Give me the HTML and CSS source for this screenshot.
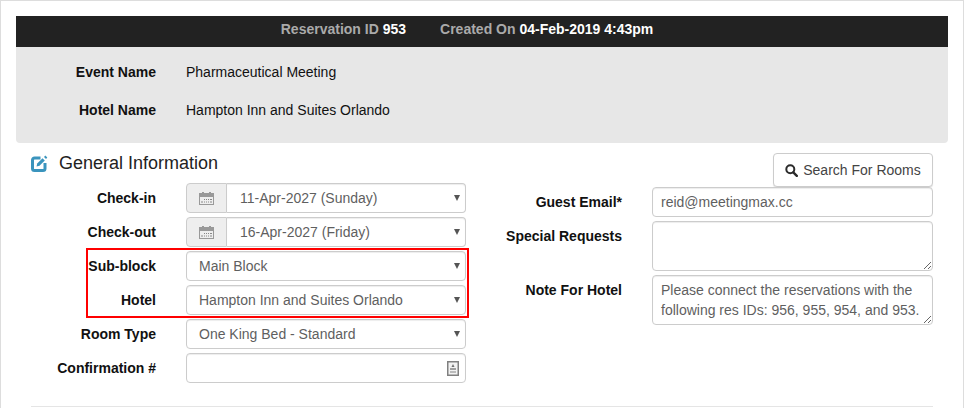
FILE: index.html
```html
<!doctype html>
<html lang="en">
  <head>
    <meta charset="utf-8">
    <title>Reservation 953</title>
    <link rel="stylesheet" href="styles.css">
  </head>
  <body>
    <div id="panel">
      <div class="res_bar">
        <span>Reservation ID <b>953</b></span>
        <span>Created On <b>04-Feb-2019 4:43pm</b></span>
      </div>
      <div class="res_info">
        <div class="info_row"><label>Event Name</label><span>Pharmaceutical Meeting</span></div>
        <div class="info_row"><label>Hotel Name</label><span>Hampton Inn and Suites Orlando</span></div>
      </div>

      <div class="form_cols">
        <div class="col_left">
          <h2 class="section_title">
            <svg class="edit_icon" viewBox="0 0 17 17" width="17" height="17">
              <path d="M9.500 3H3.500A2 2 0 0 0 1.500 5v8.500a2 2 0 0 0 2 2H12a2 2 0 0 0 2-2V8" fill="none" stroke="#3a94bd" stroke-width="3"/>
              <path d="M5.500 11.500l.7-3 5.300-5.300 2.300 2.300-5.300 5.300z" fill="#3a94bd"/>
              <path d="M14.300 .6l2 2-1.300 1.300-2-2z" fill="#3a94bd"/>
            </svg>
            General Information
          </h2>

          <div class="form_row">
            <label>Check-in</label>
            <div class="date_group">
              <span class="addon">
                <svg viewBox="0 0 15 13" width="15" height="13"><use href="#cal"/></svg>
              </span>
              <div class="select_wrap">
                <select class="date_select"><option>11-Apr-2027 (Sunday)</option></select>
              </div>
            </div>
          </div>
          <div class="form_row">
            <label>Check-out</label>
            <div class="date_group">
              <span class="addon">
                <svg viewBox="0 0 15 13" width="15" height="13"><use href="#cal"/></svg>
              </span>
              <div class="select_wrap">
                <select class="date_select"><option>16-Apr-2027 (Friday)</option></select>
              </div>
            </div>
          </div>

          <div class="marked_group">
            <div class="red_box"></div>
            <div class="form_row">
              <label>Sub-block</label>
              <div class="select_wrap"><select><option>Main Block</option></select></div>
            </div>
            <div class="form_row">
              <label>Hotel</label>
              <div class="select_wrap"><select><option>Hampton Inn and Suites Orlando</option></select></div>
            </div>
          </div>

          <div class="form_row">
            <label>Room Type</label>
            <div class="select_wrap"><select><option>One King Bed - Standard</option></select></div>
          </div>
          <div class="form_row">
            <label>Confirmation #</label>
            <div class="input_wrap">
              <input type="text" class="text_input">
              <svg class="conf_icon" viewBox="0 0 12 15" width="12" height="15">
                <rect x="0.750" y="0.750" width="10.500" height="13.500" fill="#f2f2f2" stroke="#808080" stroke-width="1.500"/>
                <path d="M6 3l1.500 3h-3z" fill="#707070"/>
                <rect x="3" y="7" width="6" height="2" fill="#a0a0a0"/>
                <rect x="3" y="10" width="6" height="2" fill="#bbb"/>
              </svg>
            </div>
          </div>
        </div>

        <div class="col_right">
          <div class="btn_line">
            <button class="search_btn">
              <svg viewBox="0 0 13 13" width="13" height="13">
                <circle cx="5.300" cy="5.300" r="4" fill="none" stroke="#2b2b2b" stroke-width="2"/>
                <path d="M8.300 8.300l3.500 3.500" stroke="#2b2b2b" stroke-width="2.400" stroke-linecap="round"/>
              </svg>
              Search For Rooms
            </button>
          </div>
          <div class="form_row right">
            <label>Guest Email*</label>
            <input type="text" class="text_input" value="reid@meetingmax.cc">
          </div>
          <div class="form_row right">
            <label class="top">Special Requests</label>
            <textarea class="text_area"></textarea>
          </div>
          <div class="form_row right">
            <label class="top">Note For Hotel</label>
            <textarea class="text_area">Please connect the reservations with the following res IDs: 956, 955, 954, and 953.</textarea>
          </div>
        </div>
      </div>
      <div class="divider"></div>
    </div>

    <svg width="0" height="0" class="defs">
      <symbol id="cal" viewBox="0 0 15 13">
        <rect x="0.500" y="1.500" width="14" height="11" fill="#eee" stroke="#999"/>
        <rect x="1" y="2" width="13" height="3" fill="#999"/>
        <rect x="3" y="0" width="2" height="3" fill="#999"/>
        <rect x="10" y="0" width="2" height="3" fill="#999"/>
        <path d="M5 7h1v1H5zM7 7h1v1H7zM9 7h1v1H9zM11 7h2v1h-2zM2 9.500h2v1H2zM5 9.500h1v1H5zM7 9.500h1v1H7zM9 9.500h1v1H9zM11 9.500h2v1h-2z" fill="#888"/>
      </symbol>
    </svg>
  </body>
</html>
```

FILE: styles.css
```css
* {
  box-sizing: border-box;
}
html, body {
  height: 100%;
}
body {
  margin: 0;
  background-color: white;
  font-family: "Liberation Sans", Arial, sans-serif;
  font-size: 14px;
  color: #111;
  overflow: hidden;
}
.defs {
  position: absolute;
}
#panel {
  height: 408px;
  width: 964px;
  padding: 15px 15px 0 15px;
  border: 1px solid #ddd;
  border-bottom: none;
  overflow: hidden;
}

/* header */
.res_bar {
  height: 31px;
  background-color: #222;
  color: #aaa;
  font-weight: bold;
  display: flex;
  justify-content: center;
  align-items: center;
  gap: 34px;
  padding-right: 30px;
  padding-bottom: 6px;
}
.res_bar b {
  color: white;
}
.res_info {
  height: 96px;
  background-color: #e7e7e7;
  border-radius: 0 0 4px 4px;
  padding-top: 6px;
}
.info_row {
  height: 38px;
  display: flex;
  align-items: center;
  gap: 30px;
}
.info_row label {
  width: 140px;
  text-align: right;
  font-weight: bold;
}

/* form */
.form_cols {
  display: flex;
  padding: 10px 15px 0 15px;
}
.col_left {
  width: 435px;
}
.col_right {
  width: 467px;
}
.section_title {
  margin: 0 0 11px 0;
  height: 19px;
  font-size: 18px;
  font-weight: normal;
  line-height: 20px;
  color: #222;
  display: flex;
  align-items: center;
  gap: 11px;
}
.edit_icon {
  margin-top: 1px;
}
.form_row {
  display: grid;
  grid-template-columns: 125px 280px;
  column-gap: 30px;
  margin-bottom: 4px;
  align-items: center;
}
.form_row label {
  text-align: right;
  font-weight: bold;
}
.form_row.right {
  grid-template-columns: 156px 281px;
}
.form_row label.top {
  align-self: start;
  padding-top: 7px;
}
.marked_group {
  position: relative;
}
.red_box {
  position: absolute;
  left: 55px;
  top: -3px;
  width: 383px;
  height: 70px;
  border: 2px solid red;
  pointer-events: none;
}
.select_wrap, .input_wrap {
  position: relative;
  flex: 1;
}
.select_wrap::after {
  content: "";
  position: absolute;
  right: 6px;
  top: 12px;
  border-left: 3.500px solid transparent;
  border-right: 3.500px solid transparent;
  border-top: 6px solid #555;
}
select, .text_input, .text_area {
  display: block;
  width: 100%;
  height: 30px;
  border: 1px solid #ccc;
  border-radius: 4px;
  background-color: white;
  color: #5f5f5f;
  font-family: inherit;
  font-size: 14px;
  box-shadow: inset 0 1px 1px rgba(0, 0, 0, .075);
  outline: none;
}
select {
  appearance: none;
  padding: 0 20px 0 12px;
}
.text_input {
  padding: 0 8px;
}
.text_area {
  height: 50px;
  padding: 4px 8px;
  line-height: 20px;
  overflow: hidden;
  resize: vertical;
}
.date_group {
  display: flex;
}
.addon {
  width: 41px;
  height: 30px;
  flex: none;
  display: flex;
  align-items: center;
  justify-content: center;
  background-color: #eee;
  border: 1px solid #ccc;
  border-radius: 4px 0 0 4px;
}
.date_select {
  border-left: none;
  border-radius: 0 4px 4px 0;
  padding-left: 13px;
}
.conf_icon {
  position: absolute;
  right: 7px;
  top: 8px;
}
.btn_line {
  display: flex;
  justify-content: flex-end;
  height: 34px;
}
.search_btn {
  width: 160px;
  height: 34px;
  padding: 0;
  border: 1px solid #ccc;
  border-radius: 4px;
  background-color: white;
  color: #444;
  font-family: inherit;
  font-size: 14px;
  display: flex;
  align-items: center;
  justify-content: center;
  gap: 5px;
  box-shadow: 0 1px 1px rgba(0, 0, 0, .1);
}
.divider {
  margin: 19px 15px 0 15px;
  border-top: 1px solid #e5e5e5;
}
```
